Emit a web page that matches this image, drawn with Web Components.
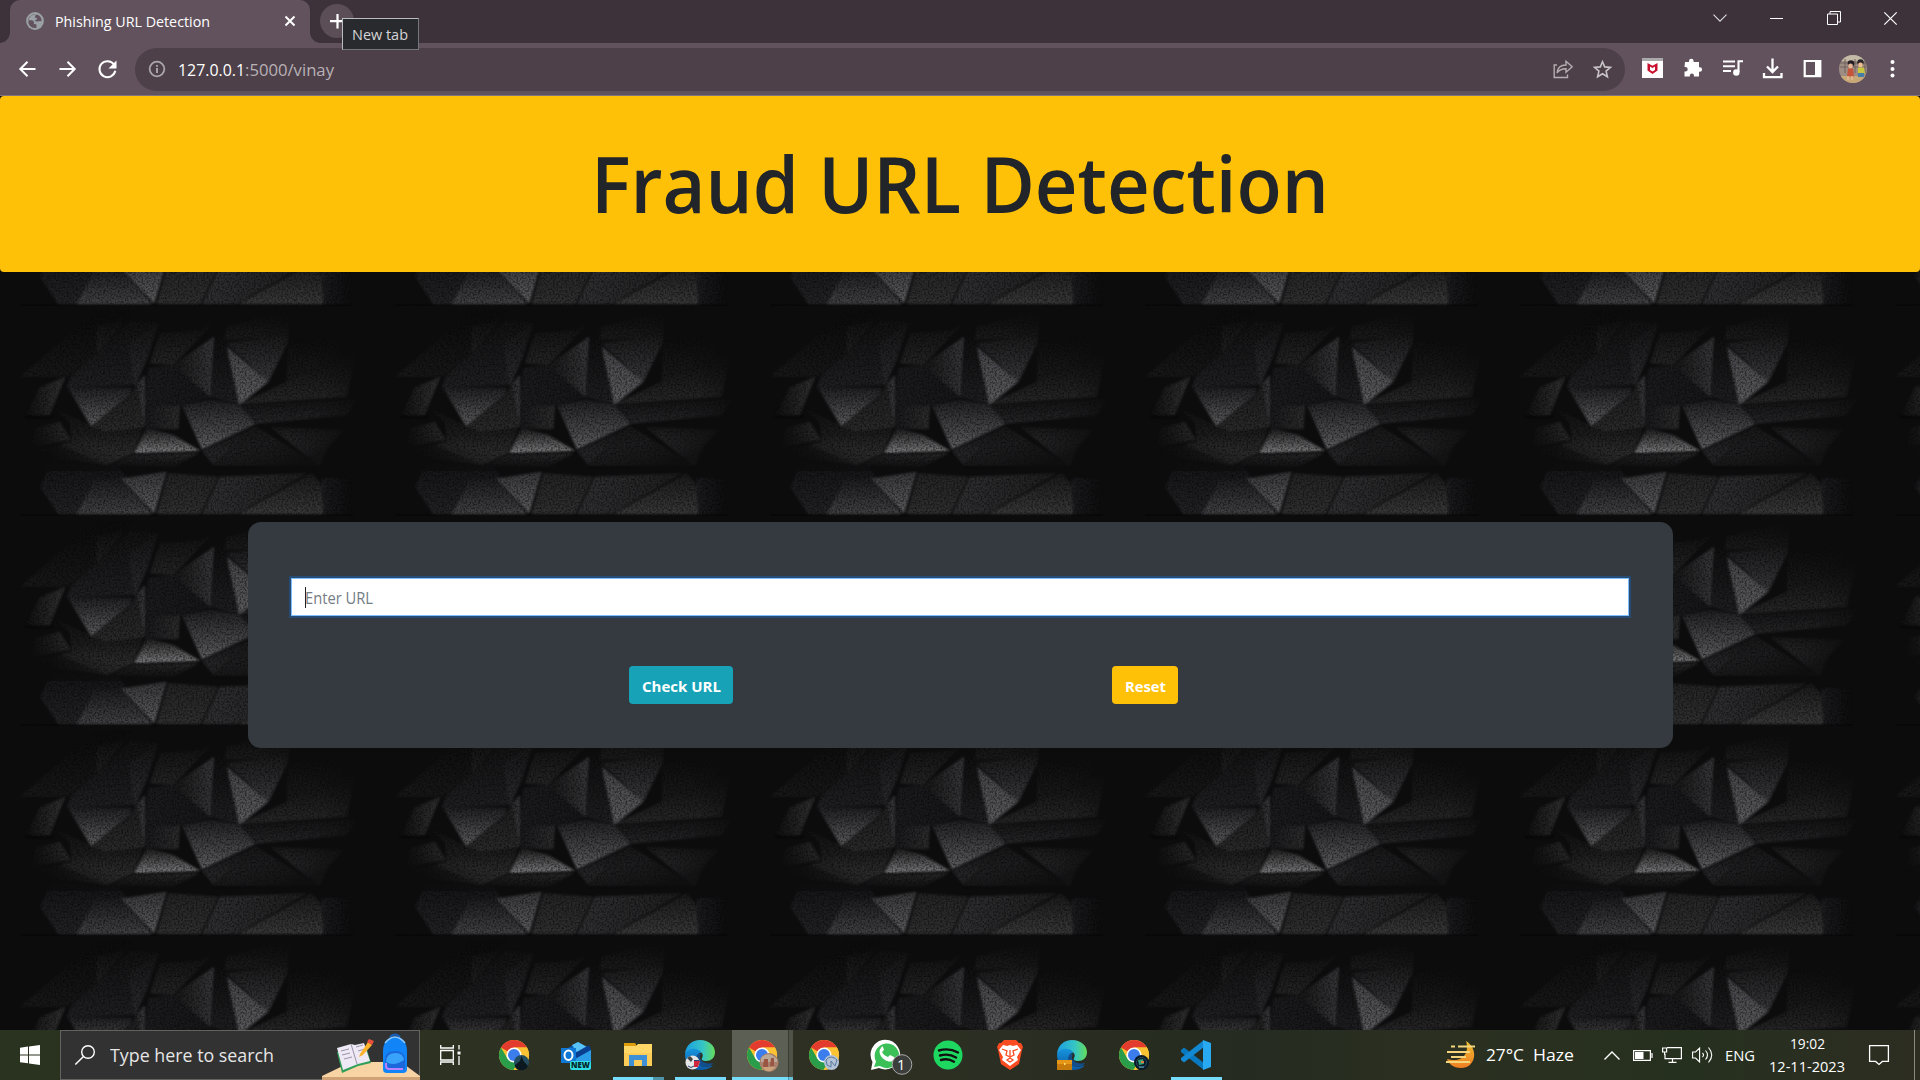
<!DOCTYPE html>
<html lang="en">
<head>
<meta charset="utf-8">
<title>Phishing URL Detection</title>
<style>
html,body{margin:0;height:100%;overflow:hidden;background:#0c0c0d}
body{font-family:"Open Sans","Noto Sans",sans-serif}
</style>
</head>
<body>
<desktop-screen></desktop-screen>
<script>
const define = (name, html, setup) => customElements.define(name, class extends HTMLElement {
  connectedCallback() {
    if (this.shadowRoot) return;
    const t = document.createElement('template');
    t.innerHTML = typeof html === 'function' ? html(this) : html;
    this.attachShadow({mode: 'open'}).append(t.content.cloneNode(true));
    if (setup) setup(this);
  }
});

/* One line of text condensed or stretched to the width in its "w" attribute. */
define('fit-text', `<style>:host{display:block;white-space:nowrap;flex:none}span{display:inline-block;transform-origin:0 50%}</style><span><slot></slot></span>`,
  el => {
    const w = +el.getAttribute('w'), s = el.shadowRoot.querySelector('span');
    el.style.width = w + 'px';
    s.style.transform = `scaleX(${w / s.getBoundingClientRect().width})`;
  });

const chrome = `<circle cx="15" cy="15" r="15" fill="#fbc02d"/><path d="M15 15 2 7.5A15 15 0 0 1 28 7.5H15z" fill="#e33b2e"/><path d="M2 7.5A15 15 0 0 0 14.5 30L21.5 18.8 8.5 18.8z" fill="#2a9d4a"/><path d="M15 7.5H28A15 15 0 0 1 14.5 30L21.5 18.8z" fill="#fbc334"/><circle cx="15" cy="15" r="7.6" fill="#fff"/><circle cx="15" cy="15" r="6" fill="#3b7ded"/>`;
const edge = `<defs><linearGradient id="a"><stop offset="0" stop-color="#1b9de2"/><stop offset=".6" stop-color="#36c6c4"/><stop offset="1" stop-color="#65dc5a"/></linearGradient><linearGradient id="b" y2="1" x2="0"><stop stop-color="#1595dd"/><stop offset="1" stop-color="#0c59a4"/></linearGradient></defs><path d="M0 14C1 5 7 0 15 0c9 0 15 6 15 12 0 6-4 9-9 9-3 0-5-1-4-3 2-3 0-7-5-7C6 11 1 13 0 14z" fill="url(#a)"/><path d="M0 15c1-5 6-7 11-6 4 1 5 3 5 4-5 0-6 8-1 12 4 3 9 2 13 0-3 4-8 5-13 5C6 30 0 23 0 15z" fill="url(#b)"/><path d="M13 14c-4 5-1 12 6 13 4 0 7-1 9-4-5 1-10 0-12-3-2-2-1-4 0-6z" fill="#124d8c"/>`;
const s = (w, h, body, box) => `<svg width="${w}" height="${h}" viewBox="${box || `0 0 ${w} ${h}`}" fill="none" overflow="visible">${body}</svg>`;
const W = 'stroke="#fff"';
const ICONS = {
  globe: s(18,18,`<circle cx="9" cy="9" r="8.9" fill="#9aa0a6"/><path d="M9.500 2.200C6 2 2.400 4.700 2.100 8.200L5 8.300Q7.500 8 8 10.200L7.800 12.200Q10 11.500 10.500 13L10.500 15.800C7 16.600 3.500 14.500 2.500 11.500 2 8 3 5 5.500 3.500zM11 2.400Q8.500 3 9 5.600L11.200 6.200Q11 8 8.700 8.300 10 10 12.500 9.300L15.700 9.100C15.700 6 14 3.500 11 2.400" fill="#62525d"/>`),
  tabclose: s(12,12,`<path d="m1.500 1.500 9 9m0-9-9 9" ${W} stroke-width="2"/>`),
  plus: s(34,34,`<circle cx="17" cy="17" r="17" fill="#5b4e57"/><path d="M17.500 10v14.500M10 17.200h15" ${W} stroke-width="2.200"/>`),
  back: s(40,40,`<path d="M28.500 20H13.500M20.500 12.800 13.300 20 20.500 27.200" ${W} stroke-width="2"/>`),
  fwd: s(40,40,`<path d="M12.500 20h15M20.500 12.800 27.700 20 20.500 27.200" ${W} stroke-width="2"/>`),
  reload: s(40,40,`<path d="M27 15.500A8 8 0 1 0 28.300 21.800" ${W} stroke-width="2"/><path d="M29.500 11.500v8h-8z" fill="#fff"/>`),
  info: s(18,18,`<circle cx="9" cy="9" r="7.300" stroke="#aaa6a9" stroke-width="1.800"/><path d="M9 8v5M9 5v1.800" stroke="#aaa6a9" stroke-width="1.900"/>`),
  share: s(40,40,`<path d="M14 16H11.200V28.500H24.500V25.500M14 24c.5-5.500 4-8 9-8V12.200L29.200 17.700 23 23.200V19.700c-4 0-7 1-9 4.300z" stroke="#b4adb1" stroke-width="1.400"/>`),
  star: s(40,40,`<path d="m19.500 12.700 2.200 5.200 5.700.5-4.300 3.700 1.300 5.600-4.900-3-4.900 3 1.300-5.600-4.300-3.700 5.700-.5z" stroke="#c8c3c6" stroke-width="1.600"/>`),
  mcafee: s(40,40,`<path d="M9 9h21v20H9z" fill="#fff"/><path d="M9 9h21v3H9z" fill="#aaa"/><path d="m14.500 14 5 2.800 5-2.800v7.600l-5 3.400-5-3.400z" fill="#c8102e"/><path d="m17 17.500 2.500 1.500 2.500-1.500v3.400l-2.500 1.600-2.500-1.600z" fill="#fff"/>`),
  puzzle: s(40,40,`<path d="M12.500 13.500h4v-1a2.300 2.300 0 0 1 4.600 0v1h5.400v5.200h.8a2.300 2.300 0 0 1 0 4.600h-.8v4.700h-5v-.8a2.100 2.100 0 0 0-4.200 0v.8h-5.300v-5h1a2.200 2.200 0 0 0 0-4.400h-1z" fill="#fff" transform="translate(-.5 -.5)"/>`),
  music: s(40,40,`<path d="M10 12.500h12M10 17.200h12M10 22h8M25.500 23V12.200h4.500" ${W} stroke-width="2.100"/><circle cx="23.300" cy="23.500" r="3.200" fill="#fff"/>`),
  download: s(40,40,`<path d="M19.500 9.500v13M14 17.500l5.500 5.500 5.500-5.500M11 24v4.200h17.500V24" ${W} stroke-width="2.300"/>`),
  panel: s(40,40,`<path d="M11.700 12h15.600v15.200H11.700z" ${W} stroke-width="2.200"/><path d="M22 11h6v17h-6z" fill="#fff"/>`),
  avatar: s(40,40,`<defs><clipPath id="c"><circle cx="20" cy="20" r="14"/></clipPath></defs><g clip-path="url(#c)"><path d="M5 5h30v30H5z" fill="#9d8d83"/><path d="M5 5h30v7H5z" fill="#c3bba6"/><path d="M7 14h26M7 18h26M12 10v14M22 10v14M32 10v14" stroke="#75625f"/><path d="M5 27h30v8H5z" fill="#c9a878"/><circle cx="18" cy="14.500" r="3.300" fill="#242025"/><circle cx="17.500" cy="17" r="2.400" fill="#e5b794"/><path d="M15 19.500h5l1 8h-7z" fill="#c6543a"/><path d="M15 27v4m4-4v4" stroke="#e5b794" stroke-width="1.500"/><circle cx="27.500" cy="13.500" r="3.200" fill="#29262b"/><circle cx="27.500" cy="16" r="2.400" fill="#eebd92"/><path d="M25 18.500h6l1 6h-7z" fill="#c8c641"/><path d="M25 24h6v4h-6z" fill="#457fa9"/></g>`),
  dots: s(40,40,`<circle cx="19.500" cy="13" r="2" fill="#fff"/><circle cx="19.500" cy="20" r="2" fill="#fff"/><circle cx="19.500" cy="26.500" r="2" fill="#fff"/>`),
  chev: s(14,8,`<path d="m.5.700 6.500 6.500 6.500-6.500" stroke="#ddd" stroke-width="1.100"/>`),
  min: s(13,13,`<path d="M0 6.500h13" ${W}/>`),
  max: s(14,14,`<path d="M.5 3h10v10.500H.5zM3 3V.500h10.500V11h-3" ${W}/>`),
  close: s(13,13,`<path d="m.3.300 12.400 12.400m0-12.400L.300 12.700" ${W} stroke-width="1.200"/>`),
  win: s(20,20,`<path d="M0 2.700 8 1.600V9.500H0zM9 1.500 20 0V9.500H9zM0 10.500H8V18.300L0 17.200zM9 10.500H20V20L9 18.500z" fill="#fff"/>`),
  search: s(20,20,`<circle cx="13" cy="7" r="6.300" ${W} stroke-width="1.400"/><path d="m8.500 11.500-8.200 8" ${W} stroke-width="1.500"/>`),
  school: s(98,49,`<path d="M0 45 29 31H79L98 45v4H0z" fill="#f8d3a4"/><path d="M0 46h98v3H0z" fill="#cfa375"/><path d="m15 21 14-5 5 0 10-1 5 17-13 3-16 7z" fill="#2f9e58"/><path d="m15 17 14-4 4 1 9-2 6 18-12 3-15 6z" fill="#eee9f5"/><path d="m29 13 6 20M19 20l8-2m-7 6 8-2m-6 6 8-2m4-10 7-2m-5 6 7-2" stroke="#9a93a9"/><path d="M38 23 46 11l4 3-9 10-4 2z" fill="#ffb52b"/><path d="m45 11 2-3 5 2-2 4z" fill="#e8503c"/><path d="M68 6q5-5 10 0" stroke="#1462c4" stroke-width="2"/><path d="M61 20C61 1 85 1 85 20v18q0 4-4 4H65q-4 0-4-4z" fill="#1184f7"/><path d="M63 12q10-12 20 0" stroke="#8ec9ff" stroke-width="1.500"/><path d="M63 29q0-9 10-9t10 9v7q0 3-3 3H66q-3 0-3-3z" fill="#1a68db"/><path d="M64 31q0-9 10-9 7 0 8 7-10 7-18 2z" fill="#39a2fb"/><path d="M64 32v3q0 3 3 3h14" stroke="#bb82ff" stroke-width="2"/>`),
  taskview: s(21,20,`<path d="M.700 5.500h12.600v9.500H.700zM.700 0v3h12.600V0M.700 20v-3h12.600v3M19 0v4.500M19 11v9" ${W} stroke-width="1.300"/><path d="M17.500 6.500h3v3h-3z" fill="#fff"/>`),
  chrome1: s(30,30,chrome+`<circle cx="22.500" cy="22.500" r="7.500" fill="#234d5e"/><path d="M16 25l5-4 1.500-5 2 5 4.500 5a7.500 7.500 0 0 1-13 1z" fill="#0c1820"/>`),
  outlook: s(30,30,`<path d="M7 8 17 2l13 8v10L17 28 7 22z" fill="#0b5fb5"/><path d="m11 5 6-3 11 6-11 6z" fill="#56c2f5"/><path d="M14 13 28 5l2 5-14 10z" fill="#093f91"/><path d="M14 19 30 10v12q0 3-3 3H14z" fill="#2b9de8"/><path d="M0 8h15v15H0z" fill="#0f78d4"/><ellipse cx="7.500" cy="15.300" rx="4" ry="4.700" ${W} stroke-width="2"/>`),
  folder: s(30,30,`<path d="M1 3h11l2 3H1z" fill="#dc9c0c"/><path d="M1 6h12l2-2h14v22H1z" fill="#ffd766"/><path d="M1 13h28v13H1z" fill="#fccc58"/><path d="M6 26V15h18v11h-5v-6h-8v6z" fill="#3d90d6"/>`),
  edge1: s(30,30,edge+`<circle cx="7.500" cy="22.500" r="7" fill="#e5e5e5"/><path d="M2 18l3-2 3 3-2 3z" fill="#444"/><path d="M9 21h6l-2 6h-4z" fill="#d2243d"/><path d="M9 20.500h5M3 26q3 3 6 0" stroke="#2a3e70"/>`),
  chrome2: s(30,30,chrome+`<circle cx="22" cy="22.500" r="9.500" fill="#a8806c"/><path d="M14 18q7-8 16 1v3H14z" fill="#b9aa98"/><path d="M17 19h4v8h-5zm7-1h3v8h-4z" fill="#9a5643"/><path d="M15 27h14l-5 4h-5z" fill="#cba279"/>`),
  chrome3: s(30,30,chrome+`<circle cx="22.500" cy="22.500" r="7.500" fill="#b4c2d5"/><path d="M17 20q5-6 11 0l-2 6-4-5v6l-4-2z" stroke="#58779f"/>`),
  whatsapp: s(30,30,`<path d="M0 30 1.500 22A14.800 14.800 0 1 1 8 28z" fill="#fff"/><path d="m3 27 2-5.500A12.300 12.300 0 1 1 9 26z" fill="#3bbf57"/><path d="M10 8c-5 5 4 16 12 13 2-1 2-4 1-4l-4-2-2 2c-3-1-5-3-6-5l2-2-1-3c0-1-2 0-2 1z" fill="#fff"/><circle cx="31" cy="24.500" r="9.800" fill="#3b3e3a" stroke="#aaa"/>`),
  spotify: s(30,30,`<circle cx="15" cy="15" r="14.500" fill="#1ed760"/><path d="M6 10.500q10-3 19 2M7 15.500q9-2.500 16 2M8 20q7-2 13 1.700" stroke="#111" stroke-width="2.400" stroke-linecap="round"/>`),
  brave: s(26,30,`<path d="M7 0h12l3 3 2 0 2 4-1 3-3 14-9 6-9-6L1 10 0 7l2-4 2 0z" fill="#fb4b20"/><path d="m6 5 4 1 3-1 3 1 4-1 4 5-4 7 1 3-8 6-8-6 1-3-4-7z" fill="#fff"/><path d="m5 9 5 2-1 4 4 2 4-2-1-4 5-2M10 20l3-2 3 2-3 2zM13 10v6" stroke="#fb4b20" stroke-width="1.300"/>`),
  edge2: s(30,30,edge+`<path d="M0 20h15v10H0z" fill="#c87b0d"/><path d="M0 20h15v4H0z" fill="#e69718"/><path d="M7 23h1.500v2H7z" fill="#ffe067"/>`),
  chrome4: s(30,30,chrome+`<circle cx="22.500" cy="22.500" r="7.500" fill="#091925"/><circle cx="22.500" cy="22.500" r="5" stroke="#285066"/><path d="M19 20l5-1 1 5-5 1z" fill="#35a177"/><path d="M22 21h3v2h-3z" fill="#e37a43"/><path d="M20 27h5" stroke="#63b4cd"/>`),
  vscode: s(30,30,`<path d="m0 10 3-2.500L23 23v7L0 12z" fill="#0878bf"/><path d="m0 20 3 2.500L23 7V0L0 18z" fill="#1389d3"/><path d="m22 0 8 3v24l-8 3z" fill="#29a9f2"/>`),
  haze: s(30,28,`<defs><linearGradient id="h" x2="0" y2="1"><stop stop-color="#edbc32"/><stop offset="1" stop-color="#ef7e22"/></linearGradient></defs><path d="M20 0c13 8 10 27-5 27-8 0-13-5-14-9C15 22 24 14 20 0z" fill="url(#h)"/><path d="M5 5.500h4m3 0h17M1 11h23M5 16h15M0 21h24" stroke="#f4d77d" stroke-width="2.200"/>`),
  up: s(16,9,`<path d="m.5 8.500 7.500-7.500 7.500 7.500" ${W} stroke-width="1.400"/>`),
  battery: s(20,11,`<path d="M.600.600h16.800v9.800H.600zM19 3v5" ${W} stroke-width="1.200"/><path d="M2 2h8.500v7H2z" fill="#fff"/>`),
  monitor: s(20,16,`<path d="M5 .600h14.400v11H3V7M10.500 12v3M6.500 15.400h8M.600 1h4v4h-4zM2.600 5v3" ${W} stroke-width="1.200"/>`),
  sound: s(21,18,`<path d="M.600 6h3l4-4v14l-4-4h-3zM10.500 7q2 2 0 4M13.500 4.500q4 4.500 0 9M16.500 1.500q6.500 7.500 0 15" ${W} stroke-width="1.100"/>`),
  notice: s(20,20,`<path d="M.600.600h18.800v15.800h-6l-3.400 3-3.400-3H.600z" ${W} stroke-width="1.300"/>`),
};
define('ui-icon', el => `<style>:host{display:flex;flex:none;align-items:center;justify-content:center}svg{display:block}</style>${ICONS[el.getAttribute('name')]}`);

define('browser-tabs', `<style>
:host{display:flex;height:43px;background:#3d3239;color:#fff;font-size:14.800px;line-height:20px}
.tab{display:flex;align-items:center;width:300px;margin-left:10px;background:#62525d;border-radius:10px 10px 0 0;box-sizing:border-box;padding:0 14px 2px 16px;gap:11px;position:relative}
.tab::before,.tab::after{content:"";position:absolute;bottom:0;width:10px;height:10px}
.tab::before{left:-10px;background:radial-gradient(circle at 0 0,#3d3239 9.500px,#62525d 10px)}
.tab::after{right:-10px;background:radial-gradient(circle at 100% 0,#3d3239 9.500px,#62525d 10px)}
.x{margin-left:auto}
.new{margin:4px 0 0 10px;height:34px;position:relative}
.tip{position:absolute;left:22px;top:14px;width:77px;height:32px;box-sizing:border-box;border:1px solid #babdc0;border-right-color:#74777a;border-bottom-color:#74777a;background:#292a2d;color:#d4d5d6;display:flex;align-items:center;padding-left:9px;z-index:2;font-size:14.800px}
.win{display:flex;margin:0 1px 0 auto;height:36px}
.win ui-icon{width:57px}
</style><div class="tab"><ui-icon name="globe"></ui-icon><fit-text w="155">Phishing URL Detection</fit-text><ui-icon class="x" name="tabclose"></ui-icon></div>
<div class="new"><ui-icon name="plus"></ui-icon><div class="tip"><fit-text w="56">New tab</fit-text></div></div>
<div class="win"><ui-icon name="chev"></ui-icon><ui-icon name="min"></ui-icon><ui-icon name="max"></ui-icon><ui-icon name="close"></ui-icon></div>`);

define('browser-toolbar', `<style>
:host{display:flex;align-items:center;height:53px;background:#62525d;box-sizing:border-box;padding:0 7px;border-bottom:1px solid #82747d}
.bar{flex:1;display:flex;align-items:center;height:43px;background:#4d4049;border-radius:22px;margin:0 8px;padding:0 2px 0 13px;box-sizing:border-box;font-size:17.200px;line-height:24px;color:#b9b1b6}
.bar fit-text{padding-top:2px}
.host{margin-left:12px;color:#fff}
.share{margin-left:auto}
</style><ui-icon name="back"></ui-icon><ui-icon name="fwd"></ui-icon><ui-icon name="reload"></ui-icon>
<div class="bar"><ui-icon name="info"></ui-icon><fit-text class="host" w="67">127.0.0.1</fit-text><fit-text w="89">:5000/vinay</fit-text><ui-icon class="share" name="share"></ui-icon><ui-icon name="star"></ui-icon></div>
<ui-icon name="mcafee"></ui-icon><ui-icon name="puzzle"></ui-icon><ui-icon name="music"></ui-icon><ui-icon name="download"></ui-icon><ui-icon name="panel"></ui-icon><ui-icon name="avatar"></ui-icon><ui-icon name="dots"></ui-icon>`);

/* Facets of the stone relief, on a 1125 x 630 grid; each is points | gradient direction | dark | light. */
const FACETS = [
 ['60,230 290,30 400,30 290,160 200,230','v','#0c0c0d','#181818'],
 ['290,160 395,60 475,70 440,180 405,255 200,262 215,225','v','#121213','#202022'],
 ['385,130 475,70 440,180 405,255','v','#151516','#2c2c2f'],
 ['288,80 380,60 290,160','v','#111','#202020'],
 ['120,262 195,232 148,348 75,348','h','#0f0f10','#333334'],
 ['203,262 395,264 390,285 273,378','v','#202022','#5e5e60'],
 ['165,325 273,378 325,395 215,425 210,370','v','#121212','#1f1f1f'],
 ['105,385 180,365 212,420 95,440','h','#111','#2a2a2a'],
 ['273,378 390,290 405,260 435,380 325,400','v','#1f1f20','#2b2b2c'],
 ['405,255 435,226 435,378','h','#202021','#3a3a3d'],
 ['310,395 430,382 400,460 320,495 180,435','v','#181818','#363637'],
 ['95,450 180,435 320,495 180,478','h','#0d0d0d','#262626'],
 ['450,190 480,100 600,90 640,70 520,195','v','#111','#252526'],
 ['445,205 520,195 632,292 545,318 435,318','h','#1c1c1e','#171719'],
 ['520,195 642,110 632,292','h','#161617','#363638'],
 ['650,110 678,112 716,312 632,290','v','#101011','#202022'],
 ['675,110 680,80 870,30 865,110 680,120','v','#0f0f10','#1b1b1c'],
 ['680,130 865,105 862,130 805,245','v','#19191a','#3a3a3d'],
 ['680,140 805,245 718,315','v','#444448','#5b5b5e'],
 ['720,312 860,245 1070,150 1040,290','v','#0e0e0e','#282829'],
 ['860,245 865,130 1040,100 1020,170','v','#0d0d0d','#1b1b1c'],
 ['720,315 1070,298 1040,345 760,372','v','#141415','#262628'],
 ['437,320 540,318 535,388 437,385','h','#1a1a1c','#2c2c2d'],
 ['547,318 630,300 715,313 765,372 606,448','v','#202022','#606063'],
 ['403,460 440,385 520,405 602,454','v','#1b1b1c','#7c7c7e'],
 ['330,495 403,464 602,456 520,500','v','#29292a','#18181a'],
 ['606,453 765,378 640,495','v','#141415','#2d2d2f'],
 ['640,499 765,378 960,500','v','#19191a','#232325'],
 ['810,380 1030,390 985,440 958,499','v','#171718','#4a4a4d'],
 ['120,560 155,490 355,500 463,640 175,643','v','#151517','#232325'],
 ['230,643 285,540 360,535 455,643','v','#1c1c1e','#434346'],
 ['363,536 500,515 463,640','v','#38383a','#5c5c5e'],
 ['505,520 655,530 600,643 470,643','v','#242425','#303031'],
 ['660,530 920,520 710,643 606,643','h','#303032','#1e1e1f'],
 ['715,643 935,520 970,560 970,643','v','#1a1a1b','#39393a'],
 ['965,535 1050,535 1050,643 970,643','h','#1c1c1f','#0e0e0f'],
];
define('stone-wall', () => {
  const grads = FACETS.map((f, i) => `<linearGradient id="g${i}" ${f[1] === 'v' ? 'x2="0" y2="1"' : ''}><stop stop-color="${f[2]}"/><stop offset="1" stop-color="${f[3]}"/></linearGradient>`).join('');
  const polys = FACETS.map((f, i) => `<polygon points="${f[0]}" fill="url(#g${i})"/>`).join('');
  return `<style>:host{display:block;overflow:hidden}svg{display:block}</style><svg width="1920" height="934"><defs>${grads}
<radialGradient id="v" cx=".46" cy=".5" r=".56"><stop offset=".72" stop-color="#0c0c0d" stop-opacity="0"/><stop offset="1" stop-color="#0c0c0d" stop-opacity=".85"/></radialGradient>
<filter id="grain" x="0" y="0" width="1" height="1" color-interpolation-filters="sRGB"><feGaussianBlur in="SourceGraphic" stdDeviation=".8" result="s"/><feTurbulence type="fractalNoise" baseFrequency=".55" numOctaves="2" seed="4"/><feColorMatrix values="0 0 0 0 0  0 0 0 0 0  0 0 0 0 0  1.300 0 0 0 -.5"/><feComposite in2="s" operator="in"/><feMerge><feMergeNode in="s"/><feMergeNode/></feMerge></filter>
<pattern id="p" width="375" height="210" patternUnits="userSpaceOnUse"><path d="M0 0h375v210H0z" fill="#0c0c0d"/><g filter="url(#grain)"><g transform="scale(.33333) translate(0 -18)">${polys}<path d="M60 648H1060M640 501H970M403 462 605 456M160 350H75" stroke="#050505" stroke-width="5"/></g></g><path d="M0 0h375v165H0z" fill="url(#v)"/></pattern></defs><path d="M0 0h1920v934H0z" fill="url(#p)"/></svg>`;
});

define('page-banner', `<style>:host{display:flex;align-items:center;justify-content:center;height:176px;background:#ffc107;border-radius:4px;color:#212529;font-size:77.500px;font-weight:600;line-height:100px;box-sizing:border-box;padding-bottom:3px}h1{font:inherit;margin:0}</style><h1><fit-text w="738"><slot></slot></fit-text></h1>`);
define('action-button', `<style>:host{display:flex}button{all:unset;box-sizing:border-box;display:flex;align-items:center;justify-content:center;width:100%;height:38px;border-radius:4px;background:var(--tone);color:#fff;font-weight:700;font-size:15px;line-height:24px;padding-top:2px}</style><button><slot></slot></button>`);
define('url-form', `<style>
:host{display:block;width:1425px;height:226px;background:#343a40;border-radius:13px;box-sizing:border-box;padding:56px 44px 0 43px}
.field{display:flex;align-items:center;height:38px;box-sizing:border-box;border:1px solid #80bdff;background:#fff;box-shadow:0 0 0 2px #264b75;color:#747c84;font-size:15.600px;line-height:24px;padding:2px 13px 0}
.caret{width:1px;height:21px;background:#222;margin:-2px -1px 0 0}
.row{display:flex;margin-top:50px;padding-left:338px}
.check{width:104px;--tone:#17a2b8;margin-right:379px}.reset{width:66px;--tone:#ffc107}
</style><div class="field"><span class="caret"></span><fit-text w="68">Enter URL</fit-text></div>
<div class="row"><action-button class="check"><fit-text w="79">Check URL</fit-text></action-button><action-button class="reset"><fit-text w="41">Reset</fit-text></action-button></div>`);
define('web-page', `<style>:host{display:block;height:934px;position:relative;overflow:hidden}stone-wall{position:absolute;inset:0}main{position:relative;display:flex;flex-direction:column}url-form{margin:250px 0 0 248px}</style>
<stone-wall></stone-wall><main><page-banner>Fraud URL Detection</page-banner><url-form></url-form></main>`);

define('task-app', el => `<style>:host{display:flex;width:62px;height:50px;align-items:center;justify-content:center;position:relative}
:host([active]) .cell{background:linear-gradient(90deg,#5c5f53 56px,#393c33 56px,#393c33 57px,#505348 57px)}
.cell{display:flex;align-items:center;justify-content:center;width:61px;height:50px;box-sizing:border-box}
:host([open])::after{content:"";position:absolute;left:6px;bottom:0;width:51px;height:3px;background:#76dcfb}
:host([active])::after{left:1px;width:61px;background:linear-gradient(90deg,#76dcfb 56px,#4f95aa 56px,#4f95aa 57px,#68c4dd 57px)}
:host([multi])::after{background:linear-gradient(90deg,#76dcfb 40px,#4f95aa 40px)}
::slotted(*){position:absolute;z-index:1}</style><div class="cell"><ui-icon name="${el.getAttribute('icon')}"></ui-icon></div><slot></slot>`);
define('task-bar', `<style>
:host{display:flex;height:50px;color:#fff;background:linear-gradient(90deg,#29331f 0,#2d3123 30%,#2d2f23 48%,#252b20 65%,#2b3021 76%,#26301f 88%,#2d2d22 100%);position:relative;box-sizing:border-box}
.start,.view{width:60px}.view{margin-right:3px}
.find{display:flex;align-items:center;width:360px;height:50px;box-sizing:border-box;border:1px solid #62635f;background:#323232;padding-left:14px;color:#e6e6e6;font-size:18.800px;line-height:26px}
.find fit-text{margin-left:15px}.school{margin-left:auto;margin-right:-1px}
.new{left:25px;top:31px;width:21px;height:9px;background:#31dce4;border-radius:2px;color:#06242a;font-size:7.800px;line-height:9px;font-weight:800;display:flex;justify-content:center}
.one{left:42px;top:25px;font-size:14.500px;line-height:19px;color:#fff}
.tray{display:flex;align-items:center;margin-left:auto;font-size:16.300px;line-height:22px}
.clock{font-size:14.500px;line-height:23px;display:flex;flex-direction:column;align-items:center;width:78px;margin:0 23px 0 13px}
.end{width:1px;height:50px;background:#888b83;margin:0 5px 0 25px}
</style><ui-icon class="start" name="win"></ui-icon>
<div class="find"><ui-icon name="search"></ui-icon><fit-text w="164">Type here to search</fit-text><ui-icon class="school" name="school"></ui-icon></div>
<ui-icon class="view" name="taskview"></ui-icon>
<task-app icon="chrome1"></task-app><task-app icon="outlook"><span class="new">NEW</span></task-app><task-app icon="folder" open multi></task-app><task-app icon="edge1" open></task-app><task-app icon="chrome2" open active></task-app><task-app icon="chrome3"></task-app><task-app icon="whatsapp"><span class="one">1</span></task-app><task-app icon="spotify"></task-app><task-app icon="brave"></task-app><task-app icon="edge2"></task-app><task-app icon="chrome4"></task-app><task-app icon="vscode" open></task-app>
<div class="tray"><ui-icon name="haze"></ui-icon><fit-text w="38" style="margin-left:10px">27°C</fit-text><fit-text w="41" style="margin-left:9px">Haze</fit-text><ui-icon name="up" style="margin-left:30px"></ui-icon><ui-icon name="battery" style="margin-left:13px"></ui-icon><ui-icon name="monitor" style="margin-left:9px"></ui-icon><ui-icon name="sound" style="margin-left:10px"></ui-icon><fit-text w="30" style="margin-left:12px;font-size:15.200px">ENG</fit-text><div class="clock"><fit-text w="35">19:02</fit-text><fit-text w="76">12-11-2023</fit-text></div><ui-icon name="notice"></ui-icon><div class="end"></div></div>`);
define('desktop-screen', `<style>:host{display:flex;flex-direction:column;width:1920px;height:1080px;overflow:hidden}browser-tabs{position:relative;z-index:2}</style><browser-tabs></browser-tabs><browser-toolbar></browser-toolbar><web-page></web-page><task-bar></task-bar>`);
</script>
</body>
</html>
